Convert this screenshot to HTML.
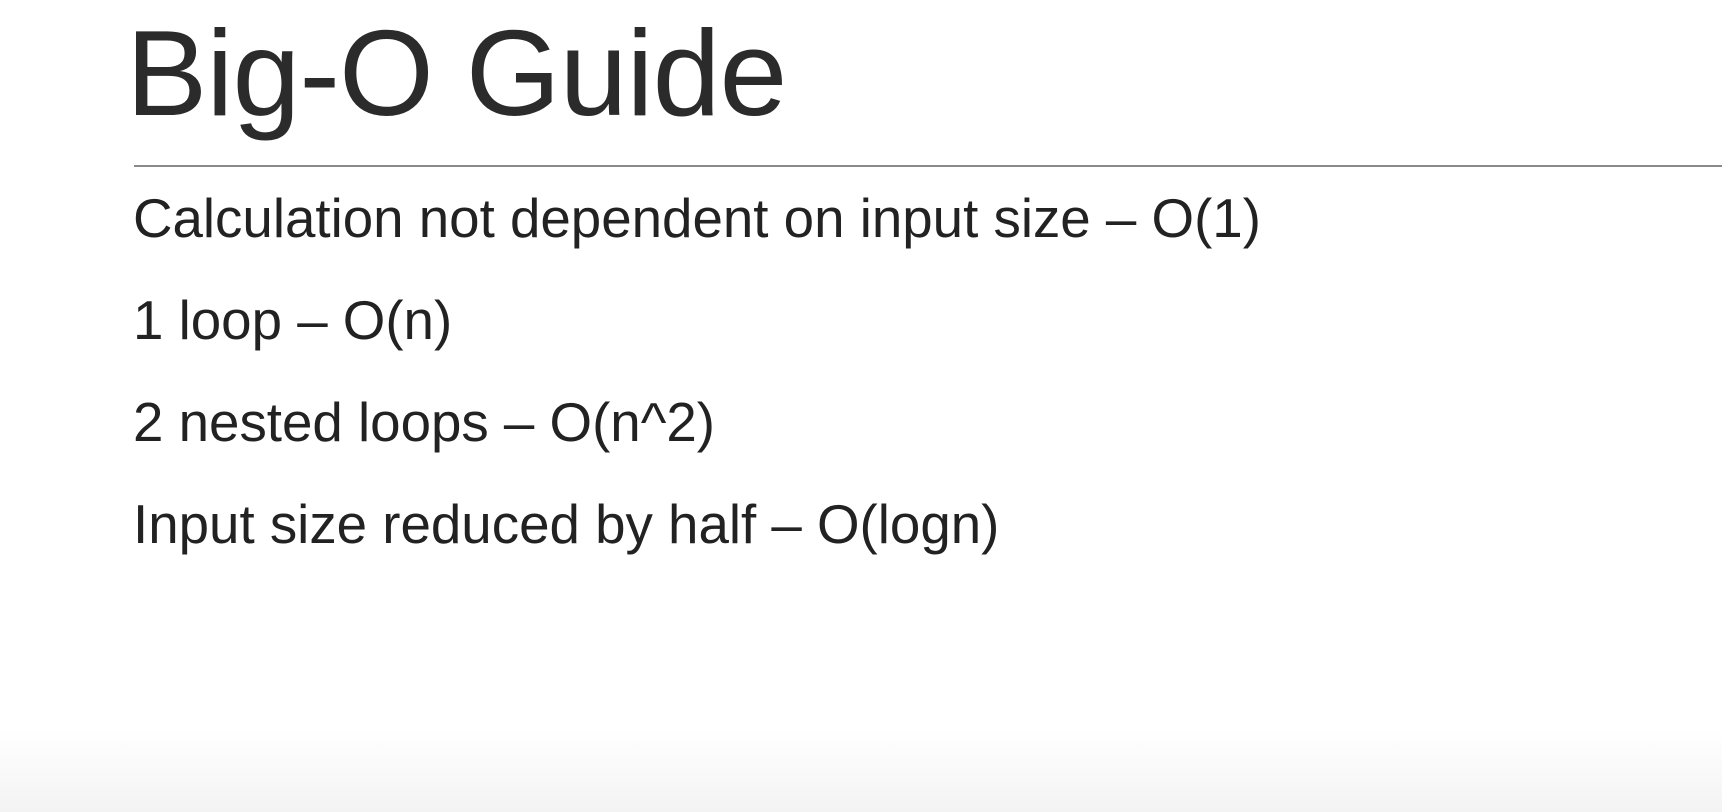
<!DOCTYPE html>
<html><head><style>
html,body{margin:0;padding:0;width:1722px;height:812px;overflow:hidden;background:#fff;}
body{position:relative;background:linear-gradient(to bottom,#fff 0px,#fff 730px,#f3f3f3 812px);font-family:"Liberation Sans",sans-serif;}
.t{position:absolute;left:126px;top:12px;font-size:122px;line-height:122px;color:#2b2b2b;letter-spacing:-1px;white-space:nowrap;}
.l{position:absolute;left:134px;top:165px;width:1588px;height:2px;background:#8a8a8a;}
.b{position:absolute;left:133px;font-size:54.7px;line-height:54px;color:#222;white-space:nowrap;}
</style></head><body>
<div class="t">Big-O Guide</div>
<div class="l"></div>
<div class="b" style="top:191px">Calculation not dependent on input size – O(1)</div>
<div class="b" style="top:293px">1 loop – O(n)</div>
<div class="b" style="top:395px">2 nested loops – O(n^2)</div>
<div class="b" style="top:497px">Input size reduced by half – O(logn)</div>
</body></html>
